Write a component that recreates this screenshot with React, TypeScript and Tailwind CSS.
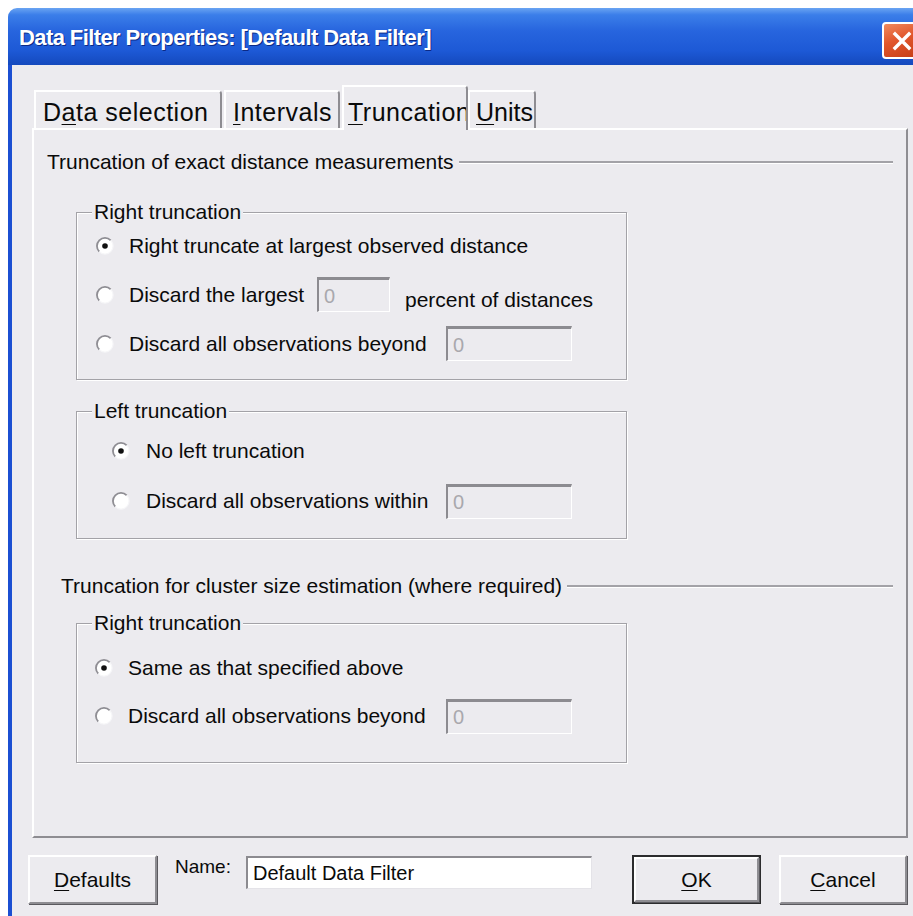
import type { ReactNode } from "react";

const face = "font-['Liberation_Sans',Arial,sans-serif]";

function Mn({ children }: { children: ReactNode }) {
  return (
    <span className="underline decoration-1 underline-offset-[3px]">
      {children}
    </span>
  );
}

function Radio({ checked = false }: { checked?: boolean }) {
  return (
    <svg width="18" height="18" viewBox="0 0 18 18" className="shrink-0">
      <circle cx="9" cy="9" r="8" fill="#ffffff" />
      <path
        d="M3.3 14.7 A8 8 0 0 1 14.7 3.3"
        fill="none"
        stroke="#8f8e94"
        strokeWidth="1.8"
      />
      <path
        d="M14.7 3.3 A8 8 0 0 1 3.3 14.7"
        fill="none"
        stroke="#f6f6f8"
        strokeWidth="1.2"
      />
      {checked && <circle cx="9" cy="9" r="2.8" fill="#111111" />}
    </svg>
  );
}

// greyed-out numeric field, sunken
function NumBox({ className }: { className: string }) {
  return (
    <div
      className={`h-[35px] shrink-0 bg-[#ecebef] border-t-[3px] border-l-2 border-t-[#8c8b90] border-l-[#8c8b90] border-b border-r border-b-white border-r-white pl-[5px] flex items-center text-[20px] text-[#a9a8ad] ${className}`}
    >
      0
    </div>
  );
}

function Group({
  title,
  className,
  children,
}: {
  title: string;
  className: string;
  children: ReactNode;
}) {
  return (
    <fieldset
      className={`w-[551px] border border-[#a3a2a7] shadow-[inset_1px_1px_0_#ffffff,1px_1px_0_#ffffff] ${className}`}
    >
      <legend className="ml-[15px] px-[2px] bg-[#ecebef] leading-[24px]">
        {title}
      </legend>
      {children}
    </fieldset>
  );
}

function Option({
  checked,
  className,
  children,
}: {
  checked?: boolean;
  className: string;
  children: ReactNode;
}) {
  return (
    <div className={`flex items-center ${className}`}>
      <Radio checked={checked} />
      {children}
    </div>
  );
}

function Rule({ children, className }: { children: ReactNode; className: string }) {
  return (
    <div className={`flex items-center h-[24px] ${className}`}>
      <span className="whitespace-nowrap">{children}</span>
      <div className="flex-1 ml-[5px] h-[3px] border-t-2 border-t-[#a3a2a7] border-b border-b-white" />
    </div>
  );
}

function Tab({
  active,
  className,
  children,
}: {
  active?: boolean;
  className: string;
  children: ReactNode;
}) {
  return (
    <div
      className={`relative bg-[#ecebef] border-t-2 border-l-2 border-t-white border-l-white border-r-2 border-r-[#8e8d92] rounded-tr-[4px] whitespace-nowrap overflow-hidden text-[25px] leading-[28px] ${
        active ? "z-10 h-[45px] -mb-[2px] pt-[11px]" : "h-[38px] pt-[6px]"
      } ${className}`}
    >
      {children}
    </div>
  );
}

function Btn({
  children,
  className,
  isDefault,
}: {
  children: ReactNode;
  className: string;
  isDefault?: boolean;
}) {
  const face3d =
    "flex items-center justify-center h-full bg-[#ecebef] border-2 border-t-white border-l-white border-r-[#8e8d92] border-b-[#8e8d92] shadow-[1px_1px_0_#5a595e]";
  if (isDefault) {
    return (
      <div className={`border-2 border-[#2c2c2e] ${className}`}>
        <div className={face3d}>{children}</div>
      </div>
    );
  }
  return <div className={`${face3d} ${className}`}>{children}</div>;
}

function TitleBar() {
  return (
    <div className="h-[57px] shrink-0 flex bg-[linear-gradient(180deg,#6aa4f2_0%,#3b7ee9_12%,#2765de_40%,#1d59d6_75%,#1449bd_100%)]">
      <div className="pl-[11px] pt-[16px] text-white font-bold text-[22px] leading-[28px] tracking-[-0.6px] whitespace-nowrap [text-shadow:1px_1px_0_#0c2a86]">
        Data Filter Properties: [Default Data Filter]
      </div>
      <div className="ml-auto mr-[3px] mt-[14px] w-[40px] h-[37px] rounded-[4px] border-2 border-white bg-[linear-gradient(160deg,#f08a5e_0%,#e1562c_45%,#c53d16_100%)] flex items-center justify-center">
        <svg width="22" height="22" viewBox="0 0 22 22">
          <path
            d="M4 4 L18 18 M18 4 L4 18"
            stroke="#ffffff"
            strokeWidth="3.4"
            strokeLinecap="square"
          />
        </svg>
      </div>
    </div>
  );
}

export default function App() {
  return (
    <div className={`w-[913px] h-[916px] overflow-hidden bg-white text-[21px] text-[#0a0a0a] ${face}`}>
      <div className="ml-[8px] mt-[8px] w-[917px] h-[908px] rounded-tl-[9px] overflow-hidden flex flex-col">
        <TitleBar />

        <div className="flex-1 flex flex-col bg-[#ecebef] border-l-4 border-l-[#1b4fd2]">
          {/* tab strip */}
          <div className="mt-[20px] h-[43px] flex items-end">
            <Tab className="ml-[22px] w-[188px] pl-[7px] tracking-[0.5px]">
              D<Mn>a</Mn>ta selection
            </Tab>
            <Tab className="ml-[2px] w-[116px] pl-[7px] tracking-[0.5px]">
              <Mn>I</Mn>ntervals
            </Tab>
            <Tab active className="ml-[2px] w-[126px] pl-[4px] tracking-[0.5px]">
              <Mn>T</Mn>runcation
            </Tab>
            <Tab className="w-[68px] pl-[6px] text-[23px]">
              <Mn>U</Mn>nits
            </Tab>
          </div>

          {/* tab page */}
          <div className="ml-[20px] w-[876px] h-[710px] border-t-2 border-l-2 border-t-white border-l-white border-r-2 border-b-2 border-r-[#8e8d92] border-b-[#8e8d92] flex flex-col">
            <Rule className="mt-[20px] pl-[13px] pr-[13px]">
              Truncation of exact distance measurements
            </Rule>

            <Group title="Right truncation" className="ml-[42px] mt-[26px] pb-[11px]">
              <div className="-mt-[3px] pl-[19px]">
                <Option checked className="h-[49px]">
                  <span className="ml-[15px] whitespace-nowrap">
                    Right truncate at largest observed distance
                  </span>
                </Option>
                <Option className="h-[49px]">
                  <span className="ml-[15px] w-[188px] whitespace-nowrap">
                    Discard the largest
                  </span>
                  <NumBox className="w-[73px]" />
                  <span className="ml-[15px] mt-[10px] whitespace-nowrap">
                    percent of distances
                  </span>
                </Option>
                <Option className="h-[49px]">
                  <span className="ml-[15px] w-[317px] whitespace-nowrap">
                    Discard all observations beyond
                  </span>
                  <NumBox className="w-[126px]" />
                </Option>
              </div>
            </Group>

            <Group title="Left truncation" className="ml-[42px] mt-[19px] pb-[12px]">
              <div className="mt-[3px] pl-[35px]">
                <Option checked className="h-[50px]">
                  <span className="ml-[16px] whitespace-nowrap">No left truncation</span>
                </Option>
                <Option className="h-[50px]">
                  <span className="ml-[16px] w-[300px] whitespace-nowrap">
                    Discard all observations within
                  </span>
                  <NumBox className="w-[126px]" />
                </Option>
              </div>
            </Group>

            <Rule className="mt-[35px] pl-[27px] pr-[13px]">
              Truncation for cluster size estimation (where required)
            </Rule>

            <Group title="Right truncation" className="ml-[42px] mt-[13px] pb-[22px]">
              <div className="mt-[9px] pl-[18px]">
                <Option checked className="h-[48px]">
                  <span className="ml-[15px] whitespace-nowrap">
                    Same as that specified above
                  </span>
                </Option>
                <Option className="h-[48px]">
                  <span className="ml-[15px] w-[318px] whitespace-nowrap">
                    Discard all observations beyond
                  </span>
                  <NumBox className="w-[126px]" />
                </Option>
              </div>
            </Group>
          </div>

          {/* footer */}
          <div className="mt-[17px] flex items-start">
            <Btn className="ml-[16px] w-[129px] h-[47px]">
              <Mn>D</Mn>efaults
            </Btn>
            <span className="ml-[18px] leading-[24px] text-[19px]">Name:</span>
            <div className="ml-[15px] mt-[1px] w-[346px] h-[33px] bg-white border-t-2 border-l-2 border-t-[#8c8b90] border-l-[#8c8b90] border-b border-r border-b-[#e4e3e8] border-r-[#e4e3e8] pl-[5px] flex items-center whitespace-nowrap text-[20px]">
              Default Data Filter
            </div>
            <Btn isDefault className="ml-[40px] w-[129px] h-[49px]">
              <Mn>O</Mn>K
            </Btn>
            <Btn className="ml-[18px] w-[128px] h-[47px]">
              <Mn>C</Mn>ancel
            </Btn>
          </div>
        </div>
      </div>
    </div>
  );
}
